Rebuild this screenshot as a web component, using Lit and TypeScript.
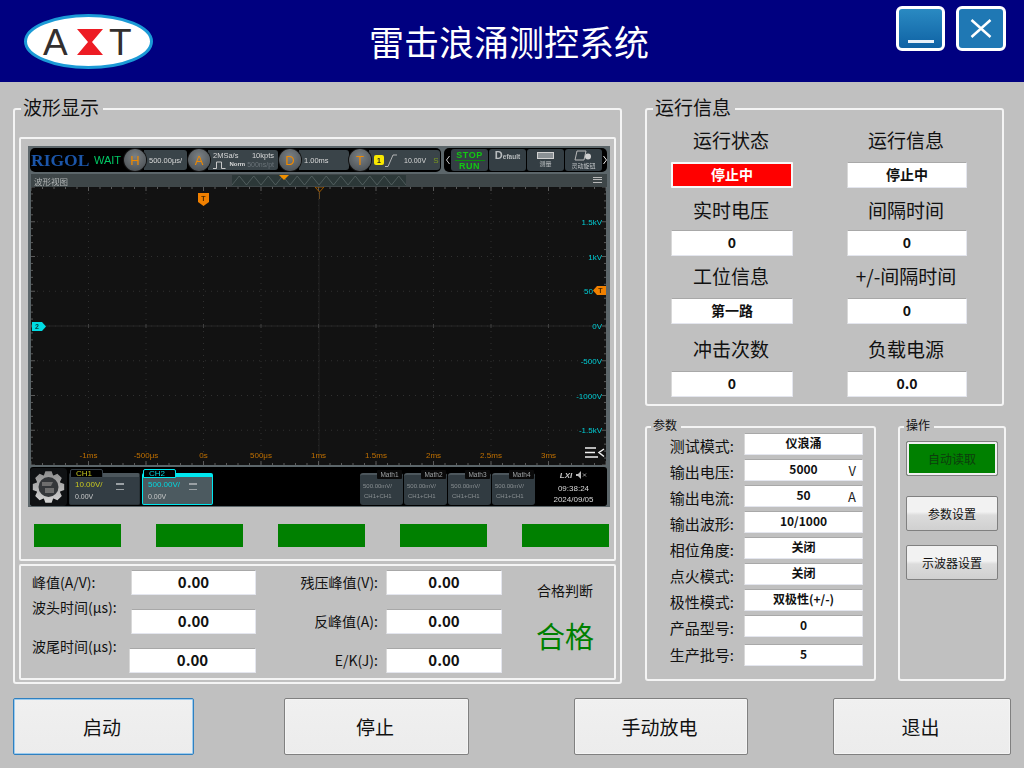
import { LitElement, html, css, svg } from "lit";
import { customElement } from "lit/decorators.js";

const FONT = css`"Noto Sans CJK SC", "Noto Sans", sans-serif`;
const UI = css`"Liberation Sans", "Noto Sans CJK SC", sans-serif`;

@customElement("scope-view")
class ScopeView extends LitElement {
  static styles = css`
    :host { display: block; width: 582px; height: 361px; background: #5c666a; font-family: ${UI}; box-sizing: border-box; padding: 2px 3px 0 2px; filter: blur(0.25px); }
    .top { display: flex; height: 24px; gap: 3px; }
    .left, .right { background: #000; border-radius: 5px; display: flex; align-items: center; height: 24px; box-sizing: border-box; }
    .left { width: 411px; padding-left: 1px; flex: none; }
    .right { flex: 1; padding: 0 0 0 2px; justify-content: space-between; min-width: 0; }
    .rigol { font: bold 17.5px "Liberation Serif", serif; color: #1b55a8; width: 63px; flex: none; white-space: nowrap; }
    .wait { font-size: 11px; color: #00c864; width: 30px; flex: none; }
    .sect { display: flex; align-items: center; height: 22px; flex: none; }
    .circle { width: 22px; height: 22px; border-radius: 50%; background: radial-gradient(circle at 50% 35%, #7a8084, #44494d); color: #f08a00; font-size: 13px; display: flex; align-items: center; justify-content: center; box-shadow: 0 0 0 1px #111; z-index: 1; flex: none; }
    .pill { height: 20px; background: #3a4449; border-radius: 0 3px 3px 0; color: #d8d8d8; font-size: 7.5px; display: flex; align-items: center; margin-left: -2px; padding-left: 5px; box-sizing: border-box; white-space: nowrap; flex: none; }
    .h { width: 43px; margin-right: 1px; }
    .a { width: 70px; margin-right: 1px; font-size: 7.5px; display: grid; grid-template-columns: 1fr auto; padding-right: 4px; line-height: 9px; align-content: center; }
    .a .dim { color: #6a7378; font-size: 7px; font-weight: 400; }
    .a .norm { grid-column: 1 / 3; display: flex; align-items: center; justify-content: flex-end; gap: 2px; font-size: 6px; font-weight: bold; }
    .d { width: 50px; }
    .t { width: 71px; gap: 1px; padding-left: 5px; font-size: 7px; }
    .one { width: 10px; height: 10px; background: #f8e800; color: #222; font-size: 7px; border-radius: 2px; display: flex; align-items: center; justify-content: center; font-weight: bold; }
    .tv { margin-left: 6px; }
    .s { color: #7a9a20; font-size: 8px; margin-left: 6px; }
    .nav { width: 4px; flex: none; }
    .tool { width: 37px; height: 22px; background: #343e44; border-radius: 3px; display: flex; flex-direction: column; align-items: center; justify-content: center; color: #c0c4c6; font-size: 6px; flex: none; box-sizing: border-box; }
    .stop { color: #12c812; font-size: 9px; font-weight: bold; letter-spacing: 0.5px; line-height: 10px; }
    .stop span { display: block; text-align: center; width: 30px; }
    .stop span:first-child { border-bottom: 1px solid #0c8c0c; }
    .def { flex-direction: row; align-items: baseline; font-size: 6.5px; font-weight: bold; color: #b8bcbe; }
    .def b { font-size: 11px; }
    .title { height: 13px; margin: 2px 0 0 1px; background: #3e4648; display: flex; position: relative; color: #b0b4b4; font-size: 8.5px; align-items: center; padding-left: 3px; font-family: "Noto Sans CJK SC", sans-serif; }
    .band { position: absolute; left: 201px; top: 1px; }
    .menu { position: absolute; right: 5px; top: 3px; width: 9px; height: 6px; border-top: 1px solid #b8b8b8; border-bottom: 1px solid #b8b8b8; box-sizing: border-box; }
    .menu::after { content: ""; display: block; height: 1px; margin-top: 1px; background: #b8b8b8; }
    .plot { display: block; margin-left: 1px; }
    .bottom { height: 39px; margin-top: 2px; background: #000; display: flex; align-items: flex-end; border-radius: 3px; position: relative; }
    .gear { width: 37px; height: 38px; flex: none; background: #101214; border-radius: 4px; }
    .ch { width: 71px; height: 32px; margin: 0 0 1px 2px; background: #333d44; border-radius: 2px; border: 1px solid #2a3338; border-top: 4px solid #4c565c; box-sizing: border-box; position: relative; color: #c8c9c9; font-size: 7px; padding: 3px 0 0 5px; flex: none; }
    .ch.on { background: #4c5a60; border: 1px solid #00e8f0; border-top: 4px solid #00e8f0; }
    .tab { position: absolute; left: 0; top: -8px; width: 33px; height: 9px; background: #000; border: 1px solid #38424a; border-radius: 2px 2px 0 0; box-sizing: border-box; font-size: 8px; line-height: 8px; padding-left: 5px; color: #c8c820; }
    .on .tab { border-color: #00e8f0; color: #00d8e0; }
    .big { font-size: 8px; color: #c8c820; display: flex; justify-content: space-between; padding-right: 15px; margin-bottom: 3px; }
    .on .big { color: #00d8e0; }
    .mini { width: 8px; height: 4px; border-top: 2px solid #9aa0a4; border-bottom: 1px solid #9aa0a4; margin-top: 3px; }
    .maths { display: flex; gap: 1px; margin: 0 0 1px auto; flex: none; }
    .m { width: 43px; height: 32px; background: #313b41; border-radius: 3px; border-top: 2px solid #4c565c; box-sizing: border-box; position: relative; color: #8a9093; font-size: 6px; padding: 6px 0 0 3px; line-height: 10px; white-space: nowrap; }
    .m div + div { margin-left: 1px; }
    .mtab { position: absolute; right: 1px; top: -5px; height: 9px; width: 25px; background: #0a0a0a; color: #a0a4a6; font-size: 6.5px; line-height: 9px; text-align: center; border-radius: 1px; }
    .clock { width: 67px; height: 38px; margin: 0 0 0 5px; background: #000; border-radius: 4px; color: #d8d8d8; font-size: 8px; text-align: center; line-height: 11px; padding-top: 2px; box-sizing: border-box; flex: none; }
    .lxi { font-style: italic; font-weight: bold; font-size: 8px; display: flex; justify-content: center; align-items: center; gap: 3px; color: #c8c8c8; margin-bottom: 3px; height: 10px; }
  `;
  plot() {
    const W = 575, H = 278;
    const xs = Array.from({ length: 11 }, (_, i) => i * 57.5);
    const ys = Array.from({ length: 9 }, (_, i) => i * 34.75);
    const xl: [string, number][] = [["-1ms", 1], ["-500μs", 2], ["0s", 3], ["500μs", 4], ["1ms", 5], ["1.5ms", 6], ["2ms", 7], ["2.5ms", 8], ["3ms", 9]];
    const yl: [string, number][] = [["1.5kV", 1], ["1kV", 2], ["50", 3], ["0V", 4], ["-500V", 5], ["-1000V", 6], ["-1.5kV", 7]];
    const ticksX = Array.from({ length: 51 }, (_, i) => i * 11.5);
    const ticksY = Array.from({ length: 41 }, (_, i) => i * 6.95);
    return html`<svg class="plot" width="${W}" height="${H}" viewBox="0 0 ${W} ${H}">
      <rect width="${W}" height="${H}" fill="#121212"></rect>
      ${xs.slice(1, -1).map(x => svg`<line x1="${x}" x2="${x}" y1="0" y2="${H}" stroke="#303030" stroke-width="1" stroke-dasharray="1 5"></line>`)}
      ${ys.slice(1, -1).map(y => svg`<line x1="0" x2="${W}" y1="${y}" y2="${y}" stroke="#303030" stroke-width="1" stroke-dasharray="1 5"></line>`)}
      <line x1="0" x2="${W}" y1="139" y2="139" stroke="#262626"></line>
      <line x1="288" x2="288" y1="0" y2="${H}" stroke="#222"></line>
      ${ticksX.map((x, i) => svg`
        <line x1="${x}" x2="${x}" y1="0" y2="${i % 5 ? 2 : 4}" stroke="#5a5a5a"></line>
        <line x1="${x}" x2="${x}" y1="${H}" y2="${H - (i % 5 ? 2 : 4)}" stroke="#5a5a5a"></line>
        ${i % 5 === 0 ? svg`<line x1="${x}" x2="${x}" y1="137" y2="141" stroke="#404040"></line>` : ""}`)}
      ${ticksY.map((y, i) => svg`
        <line y1="${y}" y2="${y}" x1="0" x2="${i % 5 ? 2 : 4}" stroke="#5a5a5a"></line>
        <line y1="${y}" y2="${y}" x1="${W}" x2="${W - (i % 5 ? 2 : 4)}" stroke="#5a5a5a"></line>`)}
      ${xl.map(([t, i]) => svg`<text x="${i * 57.5}" y="271" text-anchor="middle" font-size="8" fill="#c07000">${t}</text>`)}
      ${yl.map(([t, i]) => svg`<text x="${t === "50" ? 562 : 571}" y="${i * 34.75 + 3}" text-anchor="end" font-size="8" fill="#00ccd4">${t}</text>`)}
      <path d="M167 6h11v9l-5.500 4-5.500-4z" fill="#f08000"></path>
      <text x="172.500" y="14" text-anchor="middle" font-size="7" font-weight="bold" fill="#4a2800">T</text>
      <path d="M284 0h9l-4.500 5z" fill="none" stroke="#9c5800" stroke-width="1"></path>
      <line x1="288.500" x2="288.500" y1="5" y2="12" stroke="#6a4a20"></line>
      <path d="M575 99h-9l-4 4.500 4 4.500h9z" fill="#f08000"></path>
      <text x="569.500" y="106" text-anchor="middle" font-size="7" font-weight="bold" fill="#4a2800">T</text>
      <path d="M1 135h10l4 4.500-4 4.500h-10z" fill="#00dce4"></path>
      <text x="6" y="142" text-anchor="middle" font-size="7" font-weight="bold" fill="#063a3c">2</text>
      <g stroke="#f0f0f0" stroke-width="1.500" fill="none">
        <path d="M554 261h11M554 265.500h10M554 270h13M573 262l-5 3.500 5 4"></path>
      </g>
    </svg>`;
  }
  band() {
    const n = 12, w = 14.500;
    let d = "M0 10";
    for (let i = 0; i < n; i++) d += `L${i * w + w / 2} 1L${(i + 1) * w} 10`;
    return html`<svg class="band" width="174" height="11" viewBox="0 0 174 11"><rect width="174" height="11" fill="#2c3838"></rect><path d="${d}" fill="none" stroke="#586464" stroke-width="0.8"></path><path d="M47 0h10l-5 5z" fill="#f09000"></path></svg>`;
  }
  gear() {
    const cx = 18.5, cy = 19, teeth = 8, ro = 16, ri = 12.5;
    const pts: string[] = [];
    for (let i = 0; i < teeth; i++) {
      const a = (i / teeth) * Math.PI * 2;
      const s = Math.PI / teeth;
      for (const [r, da] of [[ri, -s * 0.95], [ro, -s * 0.5], [ro, s * 0.5], [ri, s * 0.95]] as [number, number][]) {
        pts.push(`${(cx + r * Math.cos(a + da)).toFixed(2)},${(cy + r * Math.sin(a + da)).toFixed(2)}`);
      }
    }
    return html`<svg class="gear" viewBox="0 0 37 38">
      <defs><linearGradient id="gg" x1="0" y1="0" x2="0" y2="1"><stop offset="0" stop-color="#8c8c8c"></stop><stop offset="1" stop-color="#d4d4d4"></stop></linearGradient></defs>
      <polygon points="${pts.join(" ")}" fill="url(#gg)"></polygon>
      <circle cx="${cx}" cy="${cy}" r="10" fill="#34373a"></circle>
      <path d="M12 14h11l-2 4h-9zM15 20h9v5h-9z" fill="#6e6e6e"></path>
    </svg>`;
  }
  render() {
    return html`
      <div class="top">
        <div class="left">
          <span class="rigol">RIGOL</span><span class="wait">WAIT</span>
          <div class="sect"><span class="circle">H</span><div class="pill h">500.00μs/</div></div>
          <div class="sect"><span class="circle">A</span><div class="pill a">
            <span>2MSa/s</span><span>10kpts</span>
            <span class="norm"><svg width="14" height="8" viewBox="0 0 14 8"><path d="M0 7.500h3.500v-6.500h5v6.500h4" fill="none" stroke="#c8c8c8"></path></svg>Norm <span class="dim">500ns/pt</span></span>
          </div></div>
          <div class="sect"><span class="circle">D</span><div class="pill d">1.00ms</div></div>
          <div class="sect"><span class="circle">T</span><div class="pill t"><span class="one">1</span>
            <svg width="12" height="13" viewBox="0 0 12 13"><path d="M0 12.500h3L8 1h4" fill="none" stroke="#d0d0d0" stroke-width="0.8"></path></svg>
            <span class="tv">10.00V</span><span class="s">S</span></div></div>
        </div>
        <div class="right">
          <svg class="nav" viewBox="0 0 4 10" height="10"><path d="M3.500 1L.5 5l3 4" fill="none" stroke="#ccc"></path></svg>
          <div class="tool stop"><span>STOP</span><span>RUN</span></div>
          <div class="tool def"><span><b>D</b>efault</span></div>
          <div class="tool"><svg width="17" height="7" viewBox="0 0 17 7"><rect x=".5" y=".5" width="16" height="6" fill="#8a9094" stroke="#d0d0d0"></rect></svg><span>测量</span></div>
          <div class="tool"><svg width="19" height="11" viewBox="0 0 19 11"><path d="M3 1h9l-2 9H1z" fill="none" stroke="#b8b8b8"></path><circle cx="14" cy="6.500" r="3" fill="#d0d0d0"></circle></svg><span>灵动旋钮</span></div>
          <svg class="nav" viewBox="0 0 4 10" height="10"><path d="M.5 1l3 4-3 4" fill="none" stroke="#eee"></path></svg>
        </div>
      </div>
      <div class="title">波形视图${this.band()}<span class="menu"></span></div>
      ${this.plot()}
      <div class="bottom">
        ${this.gear()}
        <div class="ch"><span class="tab">CH1</span><div class="big">10.00V/<i class="mini"></i></div><div>0.00V</div></div>
        <div class="ch on"><span class="tab">CH2</span><div class="big">500.00V/<i class="mini"></i></div><div>0.00V</div></div>
        <div class="maths">
          ${["Math1", "Math2", "Math3", "Math4"].map(m => html`<div class="m"><span class="mtab">${m}</span><div>500.00mV/</div><div>CH1+CH1</div></div>`)}
        </div>
        <div class="clock"><div class="lxi">LXI <svg width="12" height="8" viewBox="0 0 12 8"><path d="M1 3h2l3-3v8L3 5H1z" fill="#bbb"></path><path d="M8 2.500l3 3M11 2.500l-3 3" stroke="#999"></path></svg></div><div>09:38:24</div><div>2024/09/05</div></div>
      </div>`;
  }
}

@customElement("app-root")
export class AppRoot extends LitElement {
  static styles = css`
    :host { display: block; width: 1024px; height: 768px; overflow: hidden; background: #c0c0c0; font-family: ${FONT}; color: #111; }
    * { box-sizing: border-box; }
    header { height: 82px; background: #000080; display: flex; align-items: flex-start; position: relative; padding: 6px 18px 0 24px; }
    .logo { margin-top: 8px; flex: none; }
    h1 { margin: 0; position: absolute; left: 0; width: 1018px; top: 15px; text-align: center; font-size: 35px; line-height: 52px; font-weight: 400; color: #fff; }
    .wins { margin-left: auto; display: flex; gap: 11px; }
    .win { width: 49px; height: 45px; border: 3px solid #fff; border-radius: 6px; background: linear-gradient(#2a8ac2, #0f62a4); display: flex; align-items: center; justify-content: center; }
    .win.x { width: 50px; background: #1f78b4; }
    main { display: flex; gap: 23px; padding: 26px 0 0 13px; height: 616px; }
    .group { border: 2px solid #f4f4f4; border-radius: 3px; position: relative; }
    .legend { position: absolute; left: 6px; top: -15px; background: #c0c0c0; padding: 0 4px 0 2px; font-size: 19px; line-height: 24px; white-space: nowrap; }
    .legend.small { font-size: 12px; line-height: 16px; top: -11px; left: 4px; }
    .wave { width: 609px; height: 576px; padding: 27px 4px 2px; display: flex; flex-direction: column; gap: 3px; }
    .inner { border: 2px solid #f4f4f4; border-radius: 2px; }
    .scopebox { height: 424px; padding: 7px; }
    .bars { display: flex; justify-content: space-between; margin: 17px -2px 0 6px; }
    .bars i { display: block; width: 87px; height: 23px; background: #008000; }
    .meas { height: 116px; display: grid; grid-template-columns: 99px 125px 130px 116px 1fr; grid-template-rows: 25px 25px 25px; row-gap: 14px; padding: 4px 0 0 11px; font-size: 14px; align-items: center; }
    .meas .lab { line-height: 20px; white-space: nowrap; margin-top: -1px; }
    .lab.r { text-align: right; padding-right: 8px; }
    .meas .lab.up { align-self: start; margin-top: -12px; }
    .field { background: #fff; border: 1px solid #e4e6ee; border-top-color: #a8a8a8; border-left-color: #d8d8d8; border-radius: 1px; display: flex; align-items: center; justify-content: center; font-weight: 700; position: relative; padding-bottom: 3px; }
    .meas .field { height: 25px; font-size: 15px; }
    .wider { margin-left: -2px; }
    .verdict { grid-column: 5; grid-row: 1 / 4; display: flex; flex-direction: column; align-items: center; text-align: center; padding: 10px 0 0 14px; align-self: start; }
    .verdict span { font-size: 14px; line-height: 20px; }
    .verdict b { margin-top: 14px; font-size: 29px; line-height: 42px; font-weight: 400; color: #008000; }
    .side { display: flex; flex-direction: column; gap: 20px; width: 361px; }
    .info { width: 359px; height: 298px; padding: 0 0 0 24px; display: grid; grid-template-columns: 122px 120px; column-gap: 54px; grid-template-rows: 78px 68px 68px 73px; }
    .cell { display: flex; flex-direction: column; justify-content: flex-end; align-items: center; }
    .cell .t { font-size: 19px; line-height: 26px; margin-bottom: 9px; white-space: nowrap; margin-right: 2px; }
    .cell.tight .t { margin-bottom: 7px; }
    .cell .field { width: 100%; height: 26px; font-size: 14px; }
    .field.red { background: #f00; color: #fff; border: 2px solid #f8f8f8; }
    .lower { display: flex; gap: 22px; }
    .params { width: 231px; height: 255px; padding: 5px 0 0 0; display: grid; grid-template-columns: 87px 119px; column-gap: 10px; grid-auto-rows: 22px; row-gap: 4px; align-content: start; }
    .params .l { font-size: 15px; line-height: 22px; text-align: right; margin-top: 2px; white-space: nowrap; }
    .params .field { font-size: 12px; height: 22px; }
    .params .last { margin-top: 3px; }
    .unit { position: absolute; right: 6px; top: 2px; font-size: 13px; font-weight: 400; line-height: 18px; color: #222; }
    .ops { width: 108px; height: 255px; padding: 13px 6px 0; display: flex; flex-direction: column; gap: 20px; }
    .opbtn { height: 35px; flex: none; border: 1px solid #808080; border-radius: 2px; background: linear-gradient(#f2f2f2 0 45%, #dcdcdc 55%, #d0d0d0); display: flex; align-items: center; justify-content: center; font-size: 12px; }
    .opbtn.go { background: #008000; box-shadow: inset 0 0 0 2px #f0f0f0; color: #0d3d0d; }
    .opbtn.third { margin-top: -6px; }
    footer { display: flex; align-items: flex-start; padding-left: 13px; height: 70px; }
    .btn { height: 57px; border: 1px solid #808080; border-radius: 2px; background: linear-gradient(#f0f0f0, #ececec); display: flex; align-items: center; justify-content: center; font-size: 19px; box-shadow: inset 0 0 0 1px #f4f4f4; padding: 0 3px 1px 0; }
    .b1 { width: 181px; border-color: #2f80c0; box-shadow: inset 0 0 0 1px #9ccbee; margin-right: 90px; }
    .b2 { width: 185px; margin-right: 105px; }
    .b3 { width: 174px; margin-right: 85px; }
    .b4 { width: 178px; }
  `;
  render() {
    const info: [string, string, string?][] = [["运行状态", "停止中", "red"], ["运行信息", "停止中"], ["实时电压", "0"], ["间隔时间", "0"], ["工位信息", "第一路"], ["+/-间隔时间", "0"], ["冲击次数", "0"], ["负载电源", "0.0"]];
    const params: [string, string, string?][] = [["测试模式:", "仪浪涌"], ["输出电压:", "5000", "V"], ["输出电流:", "50", "A"], ["输出波形:", "10/1000"], ["相位角度:", "关闭"], ["点火模式:", "关闭"], ["极性模式:", "双极性(+/-)"], ["产品型号:", "0"], ["生产批号:", "5"]];
    return html`
      <header>
        <svg class="logo" width="130" height="56" viewBox="0 0 130 56">
          <ellipse cx="64.500" cy="27.500" rx="63" ry="26" fill="#fff" stroke="#1b9ad6" stroke-width="3"></ellipse>
          <text x="19" y="41" font-family="Liberation Sans" font-size="37" fill="#332f2e">A</text>
          <path d="M53 15h26L68 28l11 13H53l11-13z" fill="#ed1c24"></path>
          <text x="85" y="41" font-family="Liberation Sans" font-size="37" fill="#332f2e">T</text>
        </svg>
        <h1>雷击浪涌测控系统</h1>
        <div class="wins">
          <div class="win"><svg width="26" height="39" viewBox="0 0 26 39"><rect x="0" y="31" width="26" height="3" fill="#e8f0f8"></rect></svg></div>
          <div class="win x"><svg width="22" height="19" viewBox="0 0 22 19"><path d="M1.500 1l19 17M20.500 1l-19 17" stroke="#fff" stroke-width="2.500"></path></svg></div>
        </div>
      </header>
      <main>
        <section class="group wave">
          <span class="legend">波形显示</span>
          <div class="inner scopebox">
            <scope-view></scope-view>
            <div class="bars"><i></i><i></i><i></i><i></i><i></i></div>
          </div>
          <div class="inner meas">
            <span class="lab">峰值(A/V):</span><div class="field">0.00</div><span class="lab r">残压峰值(V):</span><div class="field">0.00</div>
            <div class="verdict"><span>合格判断</span><b>合格</b></div>
            <span class="lab up">波头时间(μs):</span><div class="field">0.00</div><span class="lab r">反峰值(A):</span><div class="field">0.00</div>
            <span class="lab up">波尾时间(μs):</span><div class="field wider">0.00</div><span class="lab r">E/K(J):</span><div class="field">0.00</div>
          </div>
        </section>
        <div class="side">
          <section class="group info">
            <span class="legend">运行信息</span>
            ${info.map(([t, v, c], i) => html`<div class="cell ${i === 2 || i === 3 ? "tight" : ""}"><span class="t">${t}</span><div class="field ${c ?? ""}">${v}</div></div>`)}
          </section>
          <div class="lower">
            <section class="group params">
              <span class="legend small">参数</span>
              ${params.map(([l, v, u], i) => html`<span class="l ${i === 8 ? "last" : ""}">${l}</span><div class="field ${i === 8 ? "last" : ""}">${v}${u ? html`<span class="unit">${u}</span>` : ""}</div>`)}
            </section>
            <section class="group ops">
              <span class="legend small">操作</span>
              <div class="opbtn go">自动读取</div>
              <div class="opbtn">参数设置</div>
              <div class="opbtn third">示波器设置</div>
            </section>
          </div>
        </div>
      </main>
      <footer>
        <div class="btn b1">启动</div>
        <div class="btn b2">停止</div>
        <div class="btn b3">手动放电</div>
        <div class="btn b4">退出</div>
      </footer>`;
  }
}
